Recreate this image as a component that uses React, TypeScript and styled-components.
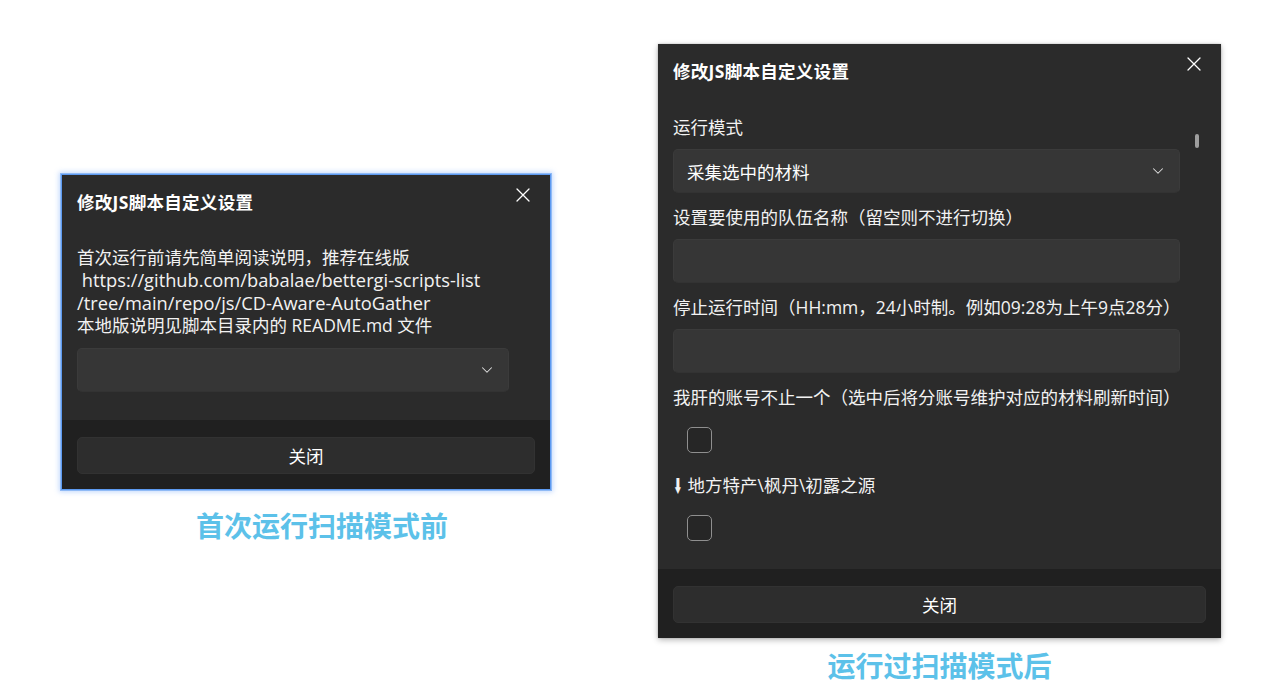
import styled, { createGlobalStyle } from 'styled-components';
import { ChevronDown } from 'lucide-react';

const GlobalStyle = createGlobalStyle`
  html, body {
    margin: 0;
    padding: 0;
    background: #ffffff;
  }
  body {
    font-family: "Open Sans", "Noto Sans CJK SC", sans-serif;
    -webkit-font-smoothing: antialiased;
  }
`;

const CloseIcon = () => (
  <svg width="14" height="14" viewBox="0 0 14 14" fill="none">
    <path d="M1 1L13 13M13 1L1 13" stroke="#ffffff" strokeWidth="1.3" strokeLinecap="round" />
  </svg>
);

// latin: lines made only of a URL, set a touch larger to match the original UI font
const DESCRIPTION = [
  { text: '首次运行前请先简单阅读说明，推荐在线版', latin: false },
  { text: ' https://github.com/babalae/bettergi-scripts-list', latin: true },
  { text: '/tree/main/repo/js/CD-Aware-AutoGather', latin: true },
  { text: '本地版说明见脚本目录内的 README.md 文件', latin: false }
];

type Field =
  | { kind: 'select'; label: string; value: string }
  | { kind: 'input'; label: string }
  | { kind: 'check'; label: string; marker?: string };

const FIELDS: Field[] = [
  { kind: 'select', label: '运行模式', value: '采集选中的材料' },
  { kind: 'input', label: '设置要使用的队伍名称（留空则不进行切换）' },
  { kind: 'input', label: '停止运行时间（HH:mm，24小时制。例如09:28为上午9点28分）' },
  { kind: 'check', label: '我肝的账号不止一个（选中后将分账号维护对应的材料刷新时间）' },
  { kind: 'check', marker: '⬇', label: '地方特产\\枫丹\\初露之源' }
];

const SettingsDialog = ({
  width,
  height,
  focused,
  scrollable,
  children
}: {
  width: number;
  height: number;
  focused?: boolean;
  scrollable?: boolean;
  children: React.ReactNode;
}) => (
  <Dialog $w={width} $h={height} $focused={!!focused}>
    <Header>
      <Title>修改JS脚本自定义设置</Title>
      <CloseButton>
        <CloseIcon />
      </CloseButton>
    </Header>
    <Body>
      {children}
      {scrollable && <ScrollThumb />}
    </Body>
    <Footer>
      <FooterButton>关闭</FooterButton>
    </Footer>
  </Dialog>
);

const App = () => {
  return (
    <Page>
      <GlobalStyle />
      <Column $top={175} $left={62}>
        <SettingsDialog width={488} height={314} focused>
          <Description>
            {DESCRIPTION.map((line, i) => (
              <DescLine key={i} $latin={line.latin}>
                {line.text}
              </DescLine>
            ))}
          </Description>
          <SelectBox>
            <span />
            <ChevronDown size={18} strokeWidth={1.4} color="#e0e0e0" />
          </SelectBox>
        </SettingsDialog>
        <Caption $gap={18} $shift={32}>
          首次运行扫描模式前
        </Caption>
      </Column>

      <Column $top={44} $left={108}>
        <SettingsDialog width={563} height={594} scrollable>
          {FIELDS.map((field, i) => (
            <FieldRow key={i}>
              <Label>
                {field.kind === 'check' && field.marker && <Marker>{field.marker}</Marker>}
                {field.label}
              </Label>
              {field.kind === 'select' && (
                <SelectBox>
                  <span>{field.value}</span>
                  <ChevronDown size={18} strokeWidth={1.4} color="#e0e0e0" />
                </SelectBox>
              )}
              {field.kind === 'input' && <TextBox />}
              {field.kind === 'check' && (
                <CheckWrap>
                  <CheckBox />
                </CheckWrap>
              )}
            </FieldRow>
          ))}
        </SettingsDialog>
        <Caption $gap={9} $shift={0}>
          运行过扫描模式后
        </Caption>
      </Column>
    </Page>
  );
};

export default App;

const Page = styled.div`
  width: 1267px;
  height: 692px;
  display: flex;
  align-items: flex-start;
  overflow: hidden;
`;

const Column = styled.div<{ $top: number; $left: number }>`
  display: flex;
  flex-direction: column;
  align-items: center;
  margin-top: ${({ $top }) => $top}px;
  margin-left: ${({ $left }) => $left}px;
`;

const Dialog = styled.div<{ $w: number; $h: number; $focused: boolean }>`
  box-sizing: border-box;
  width: ${({ $w }) => $w}px;
  height: ${({ $h }) => $h}px;
  display: flex;
  flex-direction: column;
  background: #2b2b2b;
  color: #ffffff;
  box-shadow: ${({ $focused }) =>
    $focused
      ? '0 0 0 1px #5d9af0, 0 0 0 2px #8fbaf6, 0 0 5px 3px rgba(120, 170, 250, 0.45)'
      : '0 2px 6px rgba(0, 0, 0, 0.28), 0 0 2px rgba(0, 0, 0, 0.2)'};
`;

const Header = styled.div`
  display: flex;
  justify-content: space-between;
  align-items: flex-start;
  padding: 15px 20px 0 15px;
`;

const Title = styled.div`
  font-size: 17.5px;
  line-height: 24px;
  font-weight: 700;
  letter-spacing: 0.3px;
  color: #ffffff;
`;

const CloseButton = styled.div`
  display: flex;
  width: 14px;
  height: 14px;
  margin-top: -2px;
`;

const Body = styled.div`
  position: relative;
  flex: 1;
  min-height: 0;
  overflow: hidden;
  display: flex;
  flex-direction: column;
  gap: 12px;
  padding: 32px 41px 0 15px;
`;

const Description = styled.div`
  display: flex;
  flex-direction: column;
  color: #f2f2f2;
  margin-bottom: -1px;
`;

const DescLine = styled.span<{ $latin: boolean }>`
  font-size: ${({ $latin }) => ($latin ? '18.3px' : '17.5px')};
  line-height: 22.75px;
  white-space: pre;
`;

const FieldRow = styled.div`
  display: flex;
  flex-direction: column;
  gap: 10px;
`;

const Label = styled.div`
  font-size: 17.5px;
  line-height: 24px;
  color: #f2f2f2;
  white-space: nowrap;
`;

const Marker = styled.span`
  display: inline-block;
  transform: scaleX(0.5);
  margin: 0 1px 0 -4px;
`;

const SelectBox = styled.div`
  box-sizing: border-box;
  height: 44px;
  display: flex;
  align-items: center;
  justify-content: space-between;
  padding: 0 12px 0 13px;
  background: #363636;
  border: 1px solid #3b3b3b;
  border-bottom-color: #333333;
  border-radius: 5px;
  font-size: 17.5px;
  color: #ffffff;
`;

const TextBox = styled.div`
  box-sizing: border-box;
  height: 44px;
  background: #363636;
  border: 1px solid #3b3b3b;
  border-bottom-color: #333333;
  border-radius: 5px;
`;

const CheckWrap = styled.div`
  height: 42px;
  display: flex;
  align-items: center;
  padding-left: 14px;
`;

const CheckBox = styled.div`
  box-sizing: border-box;
  width: 25px;
  height: 26px;
  border: 1px solid #8f8f8f;
  border-radius: 5px;
  background: #262626;
`;

const ScrollThumb = styled.div`
  position: absolute;
  top: 51px;
  right: 22px;
  width: 4px;
  height: 14px;
  border-radius: 2px;
  background: #9e9e9e;
`;

const Footer = styled.div`
  box-sizing: border-box;
  height: 69px;
  padding: 17px 15px 15px;
  background: #202020;
`;

const FooterButton = styled.div`
  box-sizing: border-box;
  height: 37px;
  display: flex;
  align-items: center;
  justify-content: center;
  background: #2d2d2d;
  border: 1px solid #323232;
  border-radius: 5px;
  font-size: 17.5px;
  color: #ffffff;
`;

const Caption = styled.div<{ $gap: number; $shift: number }>`
  margin-top: ${({ $gap }) => $gap}px;
  margin-left: ${({ $shift }) => $shift}px;
  font-family: "Noto Sans CJK SC", sans-serif;
  font-size: 28px;
  line-height: 36px;
  font-weight: 700;
  color: #5cc1e9;
  white-space: nowrap;
`;
